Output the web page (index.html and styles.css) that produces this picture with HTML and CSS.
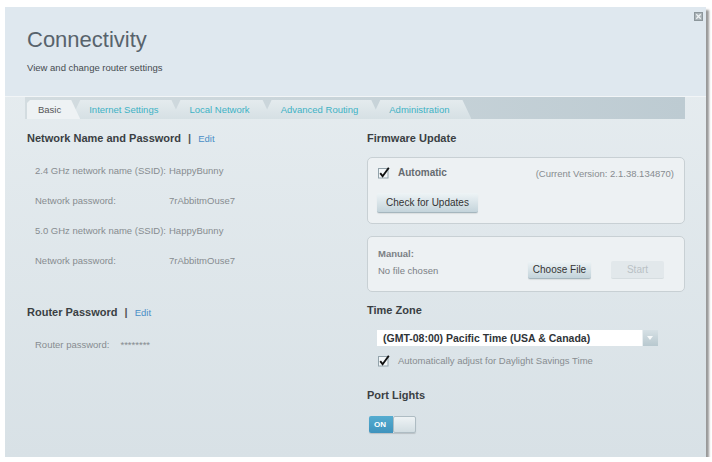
FILE: index.html
```html
<!DOCTYPE html>
<html lang="en">
<head>
  <meta charset="UTF-8" />
  <meta name="viewport" content="width=device-width, initial-scale=1.0" />
  <title>Connectivity - Router Settings</title>
  <link rel="stylesheet" href="styles.css">
</head>
<body>

  <div class="window">
    <a href="#" class="close" title="Close">
      <svg width="9" height="9" viewBox="0 0 9 9">
        <rect x="0.5" y="0.5" width="8" height="8" fill="#a9b2b7" stroke="#8c969b"/>
        <path d="M2.3 2.3 L6.7 6.7 M6.7 2.3 L2.3 6.7" stroke="#eef2f4" stroke-width="1.3"/>
      </svg>
    </a>

    <header class="page-head">
      <h1>Connectivity</h1>
      <p>View and change router settings</p>
    </header>

    <nav class="tabs">
      <a href="#" class="tab first active">Basic</a>
      <a href="#" class="tab">Internet Settings</a>
      <a href="#" class="tab">Local Network</a>
      <a href="#" class="tab">Advanced Routing</a>
      <a href="#" class="tab">Administration</a>
    </nav>

    <main class="content">
      <!-- coluna esquerda -->
      <section class="col">
        <h2 class="section-title">Network Name and Password <span class="sep">|</span> <a href="#" class="edit">Edit</a></h2>
        <div class="info-rows">
          <div class="info-row"><span>2.4 GHz network name (SSID):</span><span>HappyBunny</span></div>
          <div class="info-row"><span>Network password:</span><span>7rAbbitmOuse7</span></div>
          <div class="info-row"><span>5.0 GHz network name (SSID):</span><span>HappyBunny</span></div>
          <div class="info-row"><span>Network password:</span><span>7rAbbitmOuse7</span></div>
        </div>

        <h2 class="section-title router-title">Router Password <span class="sep">|</span> <a href="#" class="edit">Edit</a></h2>
        <div class="info-rows">
          <div class="info-row inline"><span>Router password:</span><span>********</span></div>
        </div>
      </section>

      <!-- coluna direita -->
      <section class="col">
        <h2 class="section-title">Firmware Update</h2>
        <div class="box fw-box">
          <div class="fw-auto">
            <label class="check strong">
              <svg class="check-icon" width="12" height="12" viewBox="0 0 12 12">
                <rect x="0.5" y="1.5" width="9.5" height="9.5" fill="#f3f7f9" stroke="#93a3ab"/>
                <path d="M2.2 6.2 L4.6 9.2 L10.8 0.8" fill="none" stroke="#111" stroke-width="1.9"/>
              </svg>
              Automatic
            </label>
            <span class="version">(Current Version: 2.1.38.134870)</span>
          </div>
          <button class="btn check-btn">Check for Updates</button>
        </div>

        <div class="box manual-box">
          <div class="manual-label">Manual:</div>
          <div class="manual-row">
            <span class="file-name">No file chosen</span>
            <button class="btn choose-btn">Choose File</button>
            <button class="btn start-btn" disabled>Start</button>
          </div>
        </div>

        <h2 class="section-title tz-title">Time Zone</h2>
        <div class="select">
          <span class="select-text">(GMT-08:00) Pacific Time (USA &amp; Canada)</span>
          <span class="select-arrow"></span>
        </div>
        <label class="check dst">
          <svg class="check-icon" width="12" height="12" viewBox="0 0 12 12">
            <rect x="0.5" y="1.5" width="9.5" height="9.5" fill="#f3f7f9" stroke="#93a3ab"/>
            <path d="M2.2 6.2 L4.6 9.2 L10.8 0.8" fill="none" stroke="#111" stroke-width="1.9"/>
          </svg>
          Automatically adjust for Daylight Savings Time
        </label>

        <h2 class="section-title lights-title">Port Lights</h2>
        <div class="toggle">
          <span class="toggle-on">ON</span>
          <span class="toggle-knob"></span>
        </div>
      </section>
    </main>
  </div>

</body>
</html>
```

FILE: styles.css
```css
* {
  box-sizing: border-box;
}

body {
  margin: 0;
  background-color: #fff;
  font-family: "Liberation Sans", Arial, sans-serif;
  color: #333;
}

/* janela principal do painel */
.window {
  position: relative;
  width: 701px;
  height: 450px;
  margin: 7px 0 0 5px;
  background: linear-gradient(#e8eef1, #d8e1e6);
  box-shadow: 3px 3px 2px rgba(70, 70, 70, 0.55);
  overflow: hidden;
}

.close {
  position: absolute;
  top: 5px;
  right: 3px;
  line-height: 0;
}

/* cabeçalho */
.page-head {
  height: 90px;
  padding: 20px 22px 0;
  background-color: #dfe8ef;
  border-bottom: 1px solid #f2f5f7;
}

.page-head h1 {
  margin: 0;
  font-size: 22px;
  line-height: 26px;
  font-weight: normal;
  color: #58636c;
}

.page-head p {
  margin: 9px 0 0;
  font-size: 9.5px;
  line-height: 12px;
  color: #464b50;
}

/* abas */
.tabs {
  display: flex;
  height: 22px;
  margin: 0 21px 0 20px;
  padding: 3px 0 0 2px;
  background: linear-gradient(to right, #d3dce0, #bdcbd2);
}

.tab {
  position: relative;
  height: 19px;
  line-height: 19px;
  padding: 0 22px 0 18px;
  margin-left: -9px;
  font-size: 9.5px;
  color: #40b2c5;
  text-decoration: none;
  white-space: nowrap;
  background: linear-gradient(#e4ebee, #d6e0e4);
  clip-path: polygon(9px 0, calc(100% - 9px) 0, 100% 100%, 0 100%);
}

.tab.first {
  margin-left: 0;
  padding: 0 19px 0 11px;
  clip-path: polygon(0 100%, 0 3px, 3px 0, calc(100% - 9px) 0, 100% 100%);
}

.tab.active {
  z-index: 1;
  background: #eef2f4;
  color: #555;
}

/* conteúdo em duas colunas */
.content {
  display: grid;
  grid-template-columns: 340px 318px;
  padding-left: 22px;
}

.section-title {
  margin: 12px 0 0;
  font-size: 11px;
  line-height: 14px;
  font-weight: bold;
  color: #3a3f43;
}

.section-title .sep {
  margin: 0 4px;
  color: #555;
}

.section-title .edit {
  font-size: 9.5px;
  font-weight: normal;
  color: #4a8ec6;
  text-decoration: none;
}

.info-rows {
  margin-top: 10px;
  padding-left: 8px;
}

.info-row {
  display: grid;
  grid-template-columns: 134px auto;
  height: 30px;
  line-height: 30px;
  font-size: 9.5px;
  color: #878c90;
}

.info-row.inline {
  display: flex;
  gap: 11px;
}

.router-title {
  margin-top: 29px;
}

/* caixas de firmware */
.box {
  border: 1px solid #c8d0d4;
  border-radius: 5px;
  background-color: #edf1f3;
}

.fw-box {
  margin-top: 12px;
  padding: 9px 10px 10px;
}

.fw-auto {
  display: flex;
  justify-content: space-between;
  align-items: center;
  height: 12px;
}

.check {
  display: flex;
  align-items: center;
  gap: 8px;
  font-size: 9.5px;
  line-height: 12px;
  color: #878c90;
}

.check.strong {
  font-size: 10px;
  font-weight: bold;
  color: #666b70;
}

.check-icon {
  flex-shrink: 0;
}

.version {
  font-size: 9.5px;
  color: #878c90;
}

.btn {
  height: 20px;
  padding: 0;
  font-family: inherit;
  font-size: 10px;
  color: #333;
  white-space: nowrap;
  background: linear-gradient(#eef4f6, #c4d4db);
  border: none;
  border-bottom: 1px solid #a5b6be;
  border-radius: 2px;
  box-shadow: 0 1px 1px rgba(0, 0, 0, 0.08);
}

.check-btn {
  display: block;
  width: 101px;
  margin: 14px 0 0 -1px;
}

.manual-box {
  margin-top: 12px;
  padding: 11px 20px 12px 10px;
}

.manual-label {
  font-size: 9.5px;
  line-height: 12px;
  font-weight: bold;
  color: #7b8085;
}

.manual-row {
  display: flex;
  align-items: center;
  height: 18px;
  margin-top: 1px;
}

.file-name {
  flex: 1;
  font-size: 9.5px;
  color: #7b8085;
}

.choose-btn {
  width: 63px;
  height: 18px;
}

.start-btn {
  width: 53px;
  height: 18px;
  margin-left: 20px;
  color: #b9c1c5;
  background: #e2e8eb;
  border-bottom-color: #d6dde0;
  box-shadow: none;
}

/* fuso horário */
.tz-title {
  margin-top: 11px;
}

.select {
  display: flex;
  width: 281px;
  height: 16px;
  margin: 13px 0 0 10px;
  background-color: #fff;
}

.select-text {
  flex: 1;
  padding-left: 6px;
  font-size: 10.5px;
  line-height: 16px;
  font-weight: bold;
  color: #2f3438;
}

.select-arrow {
  position: relative;
  width: 16px;
  background: linear-gradient(#d6e0e5, #b8c8cf);
  border-left: 1px solid #e8eef1;
}

.select-arrow::after {
  content: "";
  position: absolute;
  top: 6px;
  left: 4px;
  border-left: 3.5px solid transparent;
  border-right: 3.5px solid transparent;
  border-top: 4px solid #f7f9fa;
}

.dst {
  margin: 9px 0 0 11px;
}

/* luzes das portas */
.lights-title {
  margin-top: 21px;
}

.toggle {
  display: flex;
  width: 47px;
  height: 17px;
  margin: 14px 0 0 2px;
  border-radius: 2px;
  box-shadow: 0 1px 1px rgba(0, 0, 0, 0.15);
}

.toggle-on {
  width: 24px;
  padding-left: 5px;
  font-size: 8px;
  line-height: 17px;
  font-weight: bold;
  color: #fff;
  background: linear-gradient(#55acd0, #3f93bd);
  border-radius: 2px 0 0 2px;
}

.toggle-knob {
  flex: 1;
  background: linear-gradient(#eef3f5, #d2dde2);
  border: 1px solid #aebcc3;
  border-radius: 2px;
}
```
